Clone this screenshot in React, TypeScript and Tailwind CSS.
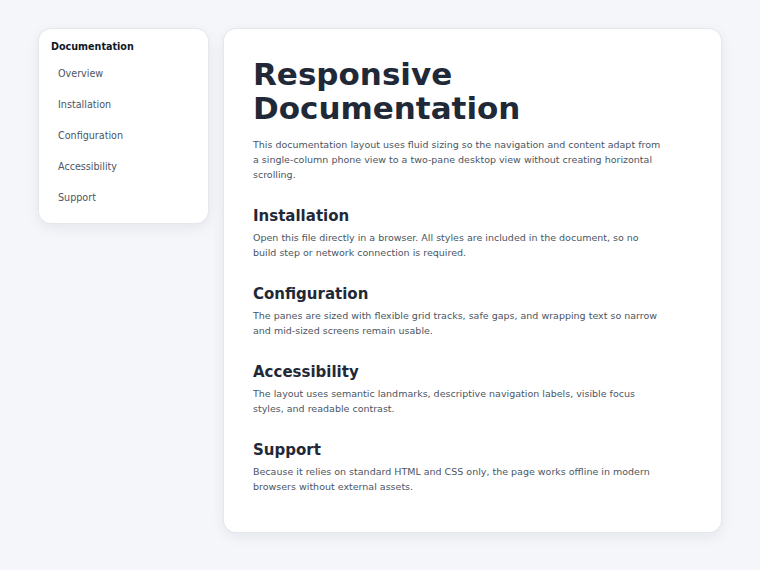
import React from 'react';

const navItems = ['Overview', 'Installation', 'Configuration', 'Accessibility', 'Support'];

const sections = [
  {
    title: 'Installation',
    body: 'Open this file directly in a browser. All styles are included in the document, so no build step or network connection is required.',
  },
  {
    title: 'Configuration',
    body: 'The panes are sized with flexible grid tracks, safe gaps, and wrapping text so narrow and mid-sized screens remain usable.',
  },
  {
    title: 'Accessibility',
    body: 'The layout uses semantic landmarks, descriptive navigation labels, visible focus styles, and readable contrast.',
  },
  {
    title: 'Support',
    body: 'Because it relies on standard HTML and CSS only, the page works offline in modern browsers without external assets.',
  },
];

export default function App() {
  return (
    <div className="min-h-screen bg-[#f4f6fa] font-['DejaVu_Sans',sans-serif]">
      <div className="grid grid-cols-[169px_1fr] items-start gap-4 px-[39px] pt-[29px] pb-[38px]">
        <nav
          aria-label="Documentation"
          className="rounded-xl bg-white px-3 pt-[11px] pb-[10px] shadow-[0_4px_14px_rgba(15,23,42,0.08)] ring-1 ring-[#e5e7eb]"
        >
          <h2 className="text-[9.6px] font-bold leading-[14px] text-[#111827]">Documentation</h2>
          <ul className="mt-[4px] flex flex-col">
            {navItems.map((item) => (
              <li key={item}>
                <a href="#" className="block rounded-md px-[7px] py-[8px] text-[9.6px] leading-[15px] text-[#4b5563]">
                  {item}
                </a>
              </li>
            ))}
          </ul>
        </nav>

        <main className="rounded-xl bg-white px-[29px] pt-[28px] pb-[38px] shadow-[0_4px_14px_rgba(15,23,42,0.08)] ring-1 ring-[#e5e7eb]">
          <h1 className="text-[31px] font-bold leading-[34px] text-[#1f2937]">Responsive Documentation</h1>
          <p className="mt-[12px] max-w-[411px] text-[9.5px] leading-[15px] text-[#4b5563]">
            This documentation layout uses fluid sizing so the navigation and content adapt from a single-column phone
            view to a two-pane desktop view without creating horizontal scrolling.
          </p>
          {sections.map((s) => (
            <section key={s.title} className="mt-[24px]">
              <h2 className="text-[15px] font-bold leading-[20px] text-[#1f2937]">{s.title}</h2>
              <p className="mt-[4px] max-w-[411px] text-[9.5px] leading-[15px] text-[#4b5563]">{s.body}</p>
            </section>
          ))}
        </main>
      </div>
    </div>
  );
}
